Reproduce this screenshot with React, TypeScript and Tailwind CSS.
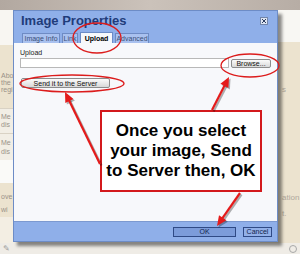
const RED = "#dc1c1c";

type ArrowProps = { x1: number; y1: number; x2: number; y2: number; color: string };

// straight arrow with a solid head at (x2, y2)
const Arrow = ({ x1, y1, x2, y2, color }: ArrowProps) => {
  const dx = x2 - x1;
  const dy = y2 - y1;
  const len = Math.hypot(dx, dy);
  const ux = dx / len;
  const uy = dy / len;
  const hl = 10;
  const hw = 4.5;
  const bx = x2 - ux * hl;
  const by = y2 - uy * hl;
  const pts = `${x2},${y2} ${bx - uy * hw},${by + ux * hw} ${bx + uy * hw},${by - ux * hw}`;
  return (
    <g>
      <line x1={x1} y1={y1} x2={bx + ux * 2} y2={by + uy * 2} stroke={color} strokeWidth={2.2} />
      <polygon points={pts} fill={color} />
    </g>
  );
};

const arrows = [
  { x1: 212, y1: 110, x2: 229, y2: 77 },
  { x1: 100, y1: 164, x2: 65, y2: 92 },
  { x1: 240, y1: 193, x2: 217, y2: 226 },
];

const tabs = [
  { label: "Image Info", w: "w-[38px]" },
  { label: "Link", w: "w-[16px]" },
  { label: "Upload", w: "w-[33px]", active: true },
  { label: "Advanced", w: "w-[34px]" },
];

const btn =
  "flex items-center justify-center rounded-[2px] border border-[#8c8c8c] bg-gradient-to-b from-[#fbfbfb] to-[#d9d9d9] text-[7px] leading-none text-[#111]";

const App = () => {
  return (
    <div className="relative w-[300px] h-[254px] overflow-hidden bg-[#f4f1ea] font-['Liberation_Sans',Arial,sans-serif]">
      {/* page behind the dialog */}
      <div className="flex flex-col h-full">
        <div className="h-[10px] bg-gradient-to-r from-[#b2a8a0] via-[#cbc2ba] to-[#b7ada5]" />
        <div className="flex flex-1">
          {/* left column */}
          <div className="w-[40px] flex flex-col text-[7px] leading-[7px] text-[#9a9288]">
            <div className="h-[35px] bg-[#f8f6f2]" />
            <div className="h-[63px] bg-[#ece3cf] pt-[27px] pl-[1px]">
              <p>Abo</p>
              <p>the</p>
              <p>regi</p>
            </div>
            <div className="h-[25px] bg-[#f2eee5] border-t border-[#d9d2c4] pt-[4px] pl-[1px] leading-[8px]">
              <p>Me</p>
              <p>dis</p>
            </div>
            <div className="h-[27px] bg-[#f2eee5] border-t border-[#d9d2c4] pt-[4px] pl-[1px] leading-[9px]">
              <p>Me</p>
              <p>dis</p>
            </div>
            <div className="h-[23px] bg-[#fafaf8]" />
            <div className="h-[34px] bg-[#ece3cf] pt-[7px] pl-[1px] leading-[13px]">
              <p>ove</p>
              <p>wi</p>
            </div>
            <div className="h-[26px] bg-[#f3eee3]" />
          </div>
          <div className="flex-1 bg-[#f6f4ef]" />
          {/* right column */}
          <div className="w-[40px] flex flex-col text-[8px] leading-[16px] text-[#b0a89c]">
            <div className="h-[32px] bg-[#f8f7f3]" />
            <div className="flex-1 bg-[#ece3cf] pl-[22px]">
              <p className="pt-[40px]">s</p>
              <p className="pt-[92px]">ation</p>
              <p>t.</p>
            </div>
          </div>
        </div>
        <div className="h-[11px] bg-[#efece6] flex items-center justify-between px-[3px] text-[8px] text-[#9c9c9c]">
          <span>✎</span>
          <span className="w-[8px] h-[8px] rounded-full border border-[#a8a8a8]" />
        </div>
      </div>

      {/* dialog */}
      <div className="absolute left-[13px] top-[10px] w-[265px] h-[232px] flex flex-col border border-[#6d8cc6] shadow-[4px_4px_3px_rgba(0,0,0,0.45)]">
        <div className="relative h-[32px] flex flex-col bg-[#8fafe9]">
          <div className="pl-[7px] pt-[2px] text-[13px] leading-[15px] font-bold text-[#1f3c7a]">Image Properties</div>
          <div className="absolute right-[9px] top-[6px] w-[8px] h-[8px] flex items-center justify-center border border-[#7386aa] bg-[#dfe6f3]">
            <svg width="6" height="6" viewBox="0 0 6 6">
              <path d="M1 1 L5 5 M5 1 L1 5" stroke="#2d3e60" strokeWidth="1" />
            </svg>
          </div>
          <div className="mt-auto flex items-end gap-[2px] pl-[8px]">
            {tabs.map((t) => (
              <div
                key={t.label}
                className={`${t.w} flex items-center justify-center text-[7px] leading-none border border-b-0 ${
                  t.active
                    ? "h-[11px] bg-[#f7f8fb] border-[#6d8cc6] font-bold text-black"
                    : "h-[10px] bg-[#a9c1ef] border-[#6e8bc4] text-[#3b4f78]"
                }`}
              >
                {t.label}
              </div>
            ))}
          </div>
        </div>
        <div className="flex-1 bg-[#f7f8fb] px-[6px] pt-[6px]">
          <div className="text-[7px] leading-[8px] text-[#222]">Upload</div>
          <div className="flex items-end gap-[2px] mt-[1px]">
            <div className="w-[209px] h-[10px] bg-white border border-[#b8b8b8]" />
            <div className={`${btn} w-[40px] h-[9px]`}>Browse...</div>
          </div>
          <div className={`${btn} mt-[10px] ml-[1px] w-[89px] h-[10px]`}>Send it to the Server</div>
        </div>
        <div className="h-[20px] flex items-center justify-end gap-[7px] pr-[5px] bg-[#8fafe9] border-t border-[#7c99d0]">
          <div className="w-[63px] h-[10px] flex items-center justify-center bg-[#7c9cda] border border-[#2f4a85] text-[7px] leading-none text-[#13244a]">
            OK
          </div>
          <div className="w-[29px] h-[10px] flex items-center justify-center bg-[#92b0e8] border border-[#2f4a85] text-[7px] leading-none text-[#13244a]">
            Cancel
          </div>
        </div>
      </div>

      {/* callout */}
      <div className="absolute left-[100px] top-[110px] w-[162px] h-[82px] border-2 border-[#d3191c] bg-white pt-[9px] text-center text-[17px] leading-[20px] font-bold text-black">
        Once you select
        <br />
        your image, Send
        <br />
        to Server then, OK
      </div>

      {/* annotations */}
      <svg className="absolute inset-0 pointer-events-none" width="300" height="254">
        <ellipse cx="97" cy="38" rx="24" ry="15" fill="none" stroke={RED} strokeWidth="1.3" />
        <ellipse cx="250" cy="65.5" rx="29" ry="11.5" fill="none" stroke={RED} strokeWidth="1.3" />
        <ellipse cx="72" cy="83.5" rx="52" ry="8.5" fill="none" stroke={RED} strokeWidth="1.3" />
        <g transform="translate(1.5,1.5)">
          {arrows.map((a, i) => (
            <Arrow key={i} {...a} color="rgba(0,0,0,0.3)" />
          ))}
        </g>
        {arrows.map((a, i) => (
          <Arrow key={i} {...a} color="#e41b1b" />
        ))}
      </svg>
    </div>
  );
};

export default App;
